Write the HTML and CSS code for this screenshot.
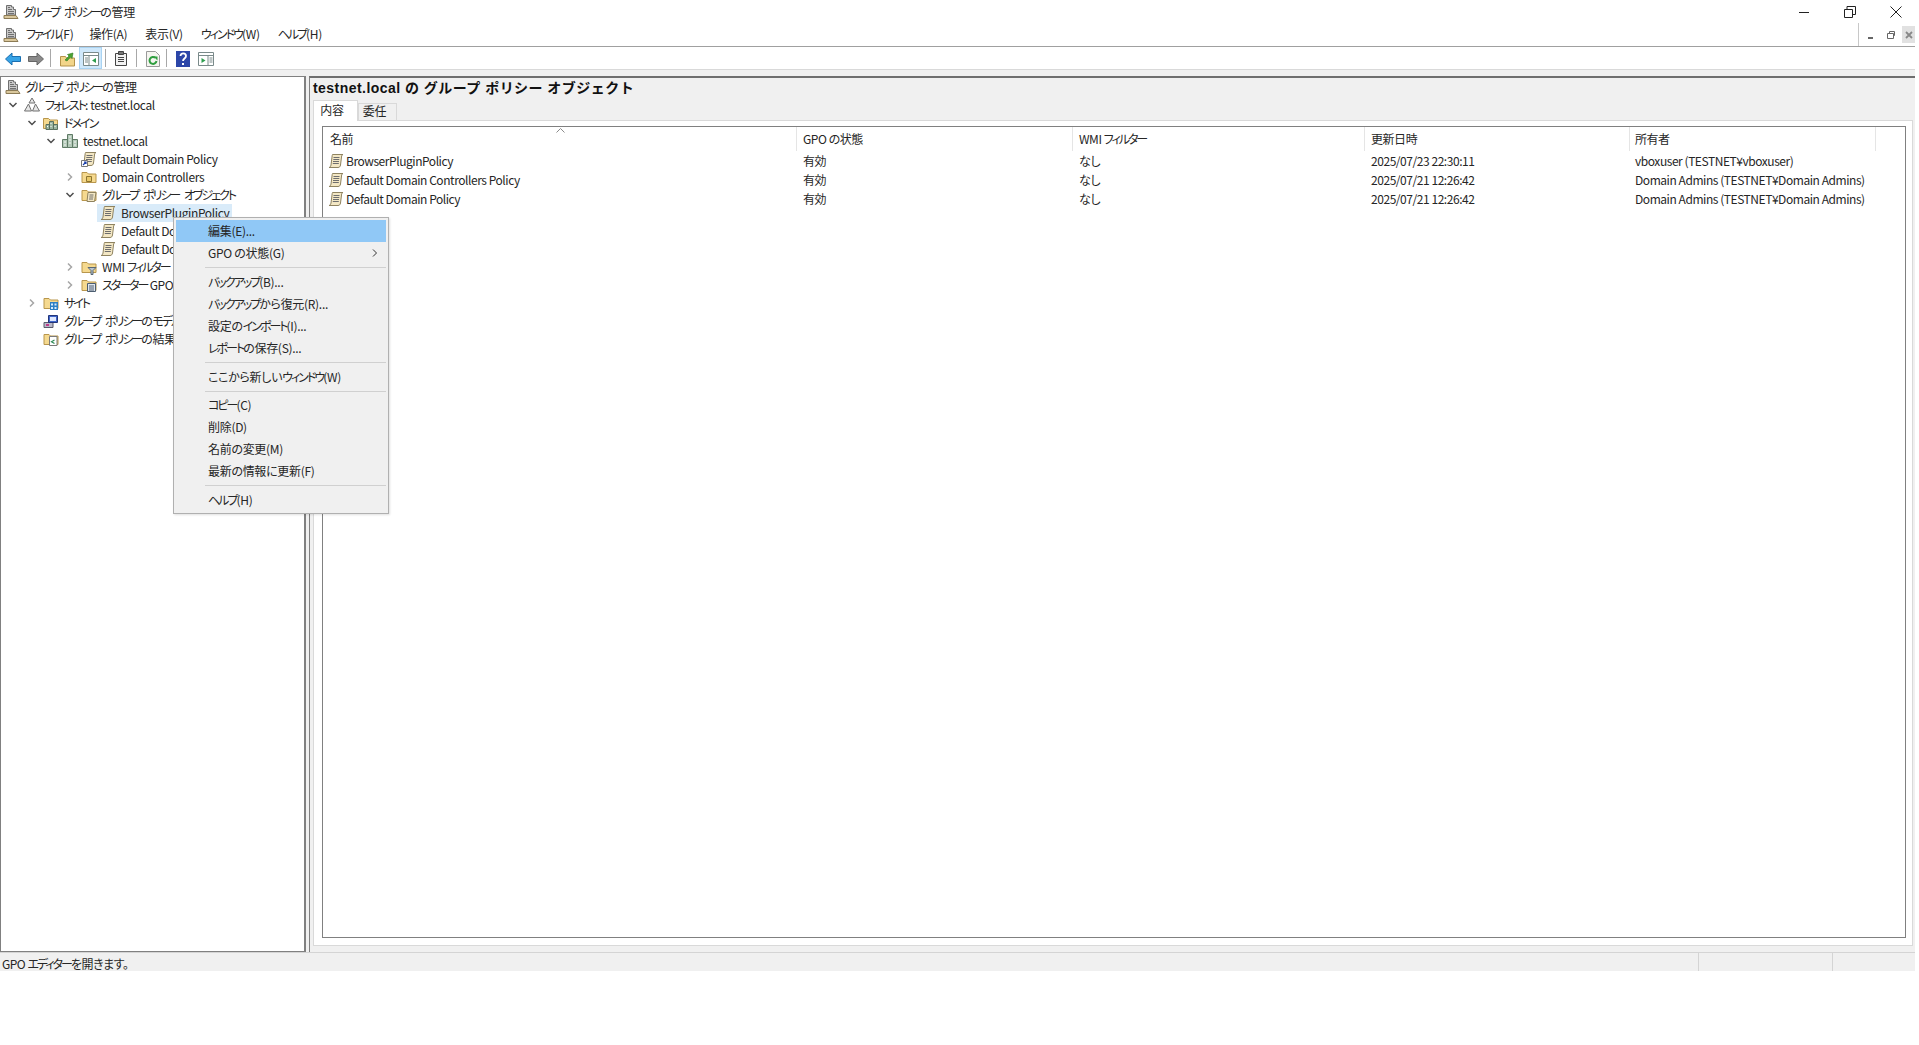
FILE: index.html
```html
<!DOCTYPE html>
<html lang="ja">
<head>
<meta charset="utf-8">
<title>グループ ポリシーの管理</title>
<link rel="stylesheet" href="styles.css">
</head>
<body>
<svg class="defs" width="0" height="0" aria-hidden="true">
  <symbol id="i-console" viewBox="0 0 16 16">
    <path d="M3.500 1.500h5v1.500h2v2.500h2v5.500h-9z" fill="#c9c9c9" stroke="#6f6f6f"/>
    <path d="M5 3.500h2M5 5.500h4M5 7.500h6M5 9.500h6" stroke="#6f6f6f"/>
    <path d="M1 11.500h12l2 3H1z" fill="#d9c79c" stroke="#8c7b55"/>
  </symbol>
  <symbol id="i-forest" viewBox="0 0 16 16">
    <path d="M8 1l3 5H5zM4.500 7l3 7h-7zM11.500 7l4 7h-7z" fill="#e6e6e6" stroke="#707070"/>
  </symbol>
  <symbol id="i-folder" viewBox="0 0 16 16">
    <path d="M1 13.500V3.500h5l1.500 1.500h7.500v8.500z" fill="#f5d98f" stroke="#b8964c"/>
  </symbol>
  <symbol id="i-domains" viewBox="0 0 16 16">
    <path d="M.5 13.500V3.500h5l1.500 1.500h7.500v8.500z" fill="#f5d98f" stroke="#b8964c"/>
    <path d="M6.500 6.500h4v8h-4zM10.500 9.500h4v5h-4zM3 9.500h3.500v5H3z" fill="#9ab5a0" stroke="#59705f"/>
    <path d="M8 8v1M8 11v1M12 11v1M4.500 11v1" stroke="#fff"/>
  </symbol>
  <symbol id="i-domain" viewBox="0 0 16 16">
    <path d="M5.500 1.500h5v13h-5zM.5 6.500h5v8h-5zM10.500 6.500h5v8h-5z" fill="#b3c9b8" stroke="#5f7a66"/>
    <path d="M7 4h2M7 7h2M7 10h2M2 9h2M2 12h2M12 9h2M12 12h2" stroke="#f5f5f5"/>
  </symbol>
  <symbol id="i-scroll" viewBox="0 0 16 16">
    <path d="M4.500 1.500h10.500c-1 .5-1.500 1-1.500 2.500l-1 8c-.2 1.500-1 2.500-2.500 2.500H1c1.200-.4 1.700-1 2-2.500l1-8c.1-1 .2-2 .5-2.500z" fill="#f3e7c4" stroke="#8f8360"/>
    <path d="M5.500 4.500h6M5.300 6.500h6M5 8.500h6M4.800 10.500h6" stroke="#6e6e6e"/>
  </symbol>
  <symbol id="i-link" viewBox="0 0 16 16">
    <use href="#i-scroll"/>
    <path d="M.5 9.500h6v6h-6z" fill="#fff" stroke="#777"/>
    <path d="M2 14l3-3M3 11h2v2" fill="none" stroke="#1b3fa8" stroke-width="1.200"/>
  </symbol>
  <symbol id="i-ou" viewBox="0 0 16 16">
    <use href="#i-folder"/>
    <path d="M5.500 7.500h5v5h-5z" fill="#e8c868" stroke="#8c7430"/>
  </symbol>
  <symbol id="i-gpofolder" viewBox="0 0 16 16">
    <use href="#i-folder"/>
    <path d="M7 5.500h8l-1.500 9H6z" fill="#f3e7c4" stroke="#8f8360"/>
    <path d="M8.500 8h4M8.300 10h4M8 12h4" stroke="#6e6e6e"/>
  </symbol>
  <symbol id="i-wmi" viewBox="0 0 16 16">
    <use href="#i-folder"/>
    <path d="M7 8.500h8l-3 3v4h-2v-4z" fill="#b9c4cf" stroke="#5a6874"/>
  </symbol>
  <symbol id="i-starter" viewBox="0 0 16 16">
    <use href="#i-folder"/>
    <path d="M6.500 6.500h8v8h-8z" fill="#dfe6ee" stroke="#4c5d70"/>
    <path d="M8 9h5M8 11h5M8 13h5" stroke="#4c5d70"/>
  </symbol>
  <symbol id="i-sites" viewBox="0 0 16 16">
    <use href="#i-folder"/>
    <path d="M7 7h8v8H7z" fill="#2c7fc4"/>
    <path d="M8 8.500h2v2H8zM11.500 8.500h2v2h-2zM8 12h2v2H8zM11.500 12h2v2h-2z" fill="#d7ecfb"/>
  </symbol>
  <symbol id="i-model" viewBox="0 0 16 16">
    <path d="M1 9.500h9v5H1z" fill="#b9b9c9" stroke="#59596b"/>
    <path d="M5.500 2.500h9v7h-9z" fill="#3f66c9" stroke="#22347a"/>
    <path d="M7 4h6v4H7z" fill="#dfe8ff"/>
    <path d="M3 11h3v2H3z" fill="#c03a8a"/>
  </symbol>
  <symbol id="i-result" viewBox="0 0 16 16">
    <use href="#i-folder"/>
    <path d="M6.500 5.500h7.500v9H6.500z" fill="#fff" stroke="#7a7a7a"/>
    <path d="M11.500 9l-3 1.800 3 1.800" fill="none" stroke="#2e8b57" stroke-width="1.200"/>
  </symbol>
  <symbol id="i-open" viewBox="0 0 10 10">
    <path d="M1.500 3l3.500 3.500L8.500 3" fill="none" stroke="#4d4d4d" stroke-width="1.500"/>
  </symbol>
  <symbol id="i-closed" viewBox="0 0 10 10">
    <path d="M3 1.500L6.500 5 3 8.500" fill="none" stroke="#a6a6a6" stroke-width="1.500"/>
  </symbol>
</svg>

<header class="titlebar">
  <svg class="ico"><use href="#i-console"/></svg>
  <span class="title-text"><span class="kana">グループ ポリシー</span>の管理</span>
  <div class="winctl">
    <span class="winbtn"><svg width="12" height="12" viewBox="0 0 12 12"><path d="M1 6.500h10" stroke="#222"/></svg></span>
    <span class="winbtn"><svg width="12" height="12" viewBox="0 0 12 12"><path d="M.5 3.500h8v8h-8zM3 3.500V.5h8.500v8H8.500" fill="none" stroke="#222"/></svg></span>
    <span class="winbtn"><svg width="12" height="12" viewBox="0 0 12 12"><path d="M.5.500l11 11M11.500.500l-11 11" stroke="#222"/></svg></span>
  </div>
</header>

<div class="app">
  <nav class="menubar">
    <svg class="ico"><use href="#i-console"/></svg>
    <span class="menu m1"><span class="kana">ファイル</span>(F)</span>
    <span class="menu m2">操作(A)</span>
    <span class="menu">表示(V)</span>
    <span class="menu"><span class="kana">ウィンドウ</span>(W)</span>
    <span class="menu"><span class="kana">ヘルプ</span>(H)</span>
    <div class="mdi">
      <span class="mdibtn"><svg width="10" height="10" viewBox="0 0 10 10"><path d="M2 8h5" stroke="#666" stroke-width="2"/></svg></span>
      <span class="mdibtn"><svg width="10" height="10" viewBox="0 0 10 10"><path d="M1.500 3.500h6v5h-6zM3.500 3.500v-2h5v4h-1" fill="none" stroke="#666"/></svg></span>
      <span class="mdibtn mdiclose"><svg width="10" height="10" viewBox="0 0 10 10"><path d="M2 2l6 6M8 2l-6 6" stroke="#888" stroke-width="1.800"/></svg></span>
    </div>
  </nav>

  <div class="toolbar">
    <span class="tool t-back"><svg width="16" height="14" viewBox="0 0 16 14"><path d="M.5 7L7 1v3.500h8.500v5H7V13z" fill="#37a3e6" stroke="#1b6fb0"/></svg></span>
    <span class="tool t-fwd"><svg width="16" height="14" viewBox="0 0 16 14"><path d="M15.500 7L9 1v3.500H.5v5H9V13z" fill="#8a8a8a" stroke="#666"/></svg></span>
    <span class="tsep"></span>
    <span class="tool t-up"><svg width="15" height="16" viewBox="0 0 15 16"><path d="M.5 15V5.500h5l1 1.500h8v8z" fill="#f2d58a" stroke="#b5934a"/><path d="M5 9l4-4-1.500-1.500L13 2l-1 5.500L10.500 6 7 10z" fill="#4aa232" stroke="#2f7a1e" stroke-width=".6"/></svg></span>
    <span class="tool tool-on"><svg width="16" height="14" viewBox="0 0 16 14"><path d="M.5.500h15v13H.5z" fill="#fff" stroke="#7a8a8a"/><path d="M.5 3.500h15M6 3.500v10" stroke="#7a8a8a"/><path d="M2 6h3M2 8h3M2 10h3" stroke="#7a8a8a"/><path d="M13 6v5L9 8.500z" fill="#2e9e4f"/></svg></span>
    <span class="tsep"></span>
    <span class="tool t-clip"><svg width="12" height="15" viewBox="0 0 12 15"><path d="M.5 2.500h11v12H.5z" fill="#f2f2f2" stroke="#444"/><path d="M3.500.5h5v3h-5z" fill="#777" stroke="#444"/><path d="M3 6.500h6M3 8.500h6M3 10.500h6" stroke="#444"/></svg></span>
    <span class="tsep"></span>
    <span class="tool t-ref"><svg width="14" height="16" viewBox="0 0 14 16"><path d="M.5.500h9l4 4v11H.5z" fill="#f5f5f0" stroke="#9a9a9a"/><path d="M10.500 10a3.500 3.500 0 1 1-1.200-3.300" fill="none" stroke="#2f9e3f" stroke-width="2"/><path d="M7.500 5.500h4v4z" fill="#2f9e3f"/></svg></span>
    <span class="tsep"></span>
    <span class="tool t-help"><svg width="14" height="16" viewBox="0 0 14 16"><path d="M0 0h14v16H0z" fill="#2c46a8"/><path d="M4.500 5c0-3.500 5.500-3.500 5.500 0 0 2.500-3 2.500-3 5" fill="none" stroke="#fff" stroke-width="1.800"/><path d="M6 12h2v2H6z" fill="#fff"/></svg></span>
    <span class="tool t-panel"><svg width="16" height="14" viewBox="0 0 16 14"><path d="M.5.500h15v13H.5z" fill="#fff" stroke="#7a8a8a"/><path d="M.5 3.500h15M10 3.500v10" stroke="#7a8a8a"/><path d="M11.500 6h3M11.500 8h3M11.500 10h3" stroke="#7a8a8a"/><path d="M3.500 6v5l4-2.500z" fill="#2e9e4f"/></svg></span>
  </div>

  <main class="workspace">
    <section class="treepane">
      <div class="trow root"><svg class="ico"><use href="#i-console"/></svg><span><span class="kana">グループ ポリシー</span>の管理</span></div>
      <div class="trow l0"><svg class="chev"><use href="#i-open"/></svg><svg class="ico"><use href="#i-forest"/></svg><span><span class="kana">フォレスト</span>: testnet.local</span></div>
      <div class="trow l1"><svg class="chev"><use href="#i-open"/></svg><svg class="ico"><use href="#i-domains"/></svg><span class="kana">ドメイン</span></div>
      <div class="trow l2"><svg class="chev"><use href="#i-open"/></svg><svg class="ico"><use href="#i-domain"/></svg><span>testnet.local</span></div>
      <div class="trow l3"><span class="chev"></span><svg class="ico"><use href="#i-link"/></svg><span>Default Domain Policy</span></div>
      <div class="trow l3"><svg class="chev"><use href="#i-closed"/></svg><svg class="ico"><use href="#i-ou"/></svg><span>Domain Controllers</span></div>
      <div class="trow l3"><svg class="chev"><use href="#i-open"/></svg><svg class="ico"><use href="#i-gpofolder"/></svg><span class="kana">グループ ポリシー オブジェクト</span></div>
      <div class="trow l4"><span class="chev chev-sel"></span><div class="selected"><svg class="ico"><use href="#i-scroll"/></svg><span>BrowserPluginPolicy</span></div></div>
      <div class="trow l4"><span class="chev"></span><svg class="ico"><use href="#i-scroll"/></svg><span>Default Domain Controllers Policy</span></div>
      <div class="trow l4"><span class="chev"></span><svg class="ico"><use href="#i-scroll"/></svg><span>Default Domain Policy</span></div>
      <div class="trow l3"><svg class="chev"><use href="#i-closed"/></svg><svg class="ico"><use href="#i-wmi"/></svg><span>WMI <span class="kana">フィルター</span></span></div>
      <div class="trow l3"><svg class="chev"><use href="#i-closed"/></svg><svg class="ico"><use href="#i-starter"/></svg><span><span class="kana">スターター</span> GPO</span></div>
      <div class="trow l1"><svg class="chev"><use href="#i-closed"/></svg><svg class="ico"><use href="#i-sites"/></svg><span class="kana">サイト</span></div>
      <div class="trow l1"><span class="chev"></span><svg class="ico"><use href="#i-model"/></svg><span><span class="kana">グループ ポリシー</span>の<span class="kana">モデル</span>作成</span></div>
      <div class="trow l1"><span class="chev"></span><svg class="ico"><use href="#i-result"/></svg><span><span class="kana">グループ ポリシー</span>の結果</span></div>
    </section>

    <section class="detail">
      <h1 class="heading">testnet.local の グループ ポリシー オブジェクト</h1>
      <div class="tabs">
        <span class="tab tab-on">内容</span>
        <span class="tab">委任</span>
      </div>
      <div class="panel">
        <div class="list">
          <div class="lrow lhead">
            <span class="cell namehead">名前<svg class="sort" width="9" height="5" viewBox="0 0 9 5"><path d="M.5 4.500l4-4 4 4" fill="none" stroke="#8a8a8a"/></svg></span>
            <span class="cell">GPO の状態</span>
            <span class="cell">WMI <span class="kana">フィルター</span></span>
            <span class="cell">更新日時</span>
            <span class="cell">所有者</span>
            <span class="cell"></span>
          </div>
          <div class="lrow">
            <span class="cell namecell"><svg class="ico"><use href="#i-scroll"/></svg>BrowserPluginPolicy</span>
            <span class="cell">有効</span><span class="cell">なし</span>
            <span class="cell">2025/07/23 22:30:11</span>
            <span class="cell">vboxuser (TESTNET¥vboxuser)</span>
          </div>
          <div class="lrow">
            <span class="cell namecell"><svg class="ico"><use href="#i-scroll"/></svg>Default Domain Controllers Policy</span>
            <span class="cell">有効</span><span class="cell">なし</span>
            <span class="cell">2025/07/21 12:26:42</span>
            <span class="cell">Domain Admins (TESTNET¥Domain Admins)</span>
          </div>
          <div class="lrow">
            <span class="cell namecell"><svg class="ico"><use href="#i-scroll"/></svg>Default Domain Policy</span>
            <span class="cell">有効</span><span class="cell">なし</span>
            <span class="cell">2025/07/21 12:26:42</span>
            <span class="cell">Domain Admins (TESTNET¥Domain Admins)</span>
          </div>
        </div>
      </div>
    </section>
  </main>

  <footer class="statusbar">
    <span class="st-main">GPO <span class="kana">エディター</span>を開きます。</span>
    <span class="st-a"></span>
    <span class="st-b"></span>
  </footer>
</div>

<div class="ctx">
  <div class="ci ci-on">編集(E)...</div>
  <div class="ci">GPO の状態(G)<svg class="ci-arrow" width="6" height="8" viewBox="0 0 6 8"><path d="M1 .5L4.500 4 1 7.500" fill="none" stroke="#333"/></svg></div>
  <div class="cs"></div>
  <div class="ci"><span class="kana">バックアップ</span>(B)...</div>
  <div class="ci"><span class="kana">バックアップ</span>から復元(R)...</div>
  <div class="ci">設定の<span class="kana">インポート</span>(I)...</div>
  <div class="ci"><span class="kana">レポート</span>の保存(S)...</div>
  <div class="cs"></div>
  <div class="ci">ここから新しい<span class="kana">ウィンドウ</span>(W)</div>
  <div class="cs cs-short"></div>
  <div class="ci"><span class="kana">コピー</span>(C)</div>
  <div class="ci">削除(D)</div>
  <div class="ci">名前の変更(M)</div>
  <div class="ci">最新の情報に更新(F)</div>
  <div class="cs"></div>
  <div class="ci"><span class="kana">ヘルプ</span>(H)</div>
</div>
</body>
</html>
```

FILE: styles.css
```css
* { box-sizing: border-box; }
html, body { margin: 0; padding: 0; background: #fff; }
body {
  width: 1919px;
  height: 1045px;
  overflow: hidden;
  position: relative;
  font-family: "Noto Sans CJK JP", "Noto Sans", sans-serif;
  font-size: 12px;
  font-feature-settings: "palt";
  letter-spacing: -.3px;
  color: #262626;
  line-height: 18px;
}
.kana { letter-spacing: -2px; word-spacing: 4px; }
.defs { position: absolute; }
.ico { width: 16px; height: 16px; flex: none; display: block; }

.titlebar { display: flex; align-items: center; height: 23px; padding-left: 3px; }
.title-text { margin-left: 4px; }
.winctl { display: flex; margin-left: auto; }
.winbtn { width: 46px; height: 23px; display: flex; align-items: center; justify-content: center; }

.app { width: 1915px; }

.menubar {
  display: flex; align-items: center; height: 24px; padding: 0 0 0 3px;
  border-bottom: 1px solid #a0a0a0;
}
.menu { margin-left: 18px; padding-bottom: 2px; }
.m1 { margin-left: 7px; }
.m2 { margin-left: 16px; }
.mdi {
  display: flex; margin-left: auto; height: 23px;
  border-left: 1px solid #c8c8c8; align-items: center;
}
.mdibtn { width: 17px; height: 17px; margin-left: 3px; display: flex; align-items: center; justify-content: center; }
.mdiclose { background: #e1e1e1; width: 13px; }

.toolbar {
  display: flex; align-items: center; height: 23px; padding-left: 5px;
  border-bottom: 1px solid #d9d9d9;
}
.tool { display: flex; align-items: center; justify-content: center; height: 22px; padding-top: 1px; }
.t-fwd { margin-left: 7px; }
.tsep { width: 1px; height: 18px; background: #a8a8a8; }
.t-fwd + .tsep { margin-left: 6px; }
.t-up { margin-left: 9px; }
.tool-on {
  width: 23px; margin-left: 4px; background: #cfe8fb; border: 1px solid #a9d3f2;
}
.tool-on + .tsep { margin-left: 3px; }
.t-clip { margin-left: 9px; }
.t-clip + .tsep { margin-left: 9px; }
.t-ref { margin-left: 9px; }
.t-ref + .tsep { margin-left: 6px; }
.t-help { margin-left: 9px; }
.t-panel { margin-left: 8px; }

.workspace {
  display: flex; height: 882px; padding-top: 6px; background: #f0f0f0;
}
.treepane {
  width: 306px; height: 876px; background: #fff;
  border: 1px solid #808080; border-right-width: 2px;
  letter-spacing: -.38px;
}
.treepane .kana { letter-spacing: -2px; }
.trow { display: flex; align-items: center; height: 18px; white-space: nowrap; }
.trow > span:last-child, .selected > span { margin-left: 3px; padding: 0 2px; }
.root { padding-left: 4px; margin-top: 1px; }
.root > span:last-child { margin-left: 2px; }
.l0 { padding-left: 7px; }
.l1 { padding-left: 26px; }
.l2 { padding-left: 45px; }
.l3 { padding-left: 64px; }
.l4 { padding-left: 83px; }
.chev { width: 10px; height: 10px; flex: none; margin-right: 6px; display: block; }
.chev-sel { margin-right: 3px; }
.selected { display: flex; align-items: center; height: 18px; padding: 0 1px 0 3px; background: #d9ebf9; }

.detail {
  margin-left: 3px; width: 1606px; height: 876px;
  border-top: 2px solid #6e6e6e; border-left: 1px solid #808080;
  padding-left: 3px; display: flex; flex-direction: column;
}
.heading {
  margin: 0; height: 21px; font-size: 14px; font-weight: 700; line-height: 21px;
  color: #111; letter-spacing: .46px; white-space: nowrap; font-feature-settings: normal;
  font-family: "Liberation Sans", "Noto Sans CJK JP", sans-serif;
}
.tabs { display: flex; height: 21px; align-items: flex-end; }
.tab {
  width: 39px; height: 17px; text-align: center; line-height: 14px; padding-right: 6px;
  background: #f0f0f0; border: 1px solid #d9d9d9; border-bottom: 0;
}
.tab-on {
  width: 45px; height: 21px; line-height: 17px; background: #fff;
  position: relative; z-index: 1; margin-bottom: -1px; padding-right: 7px;
}
.panel {
  height: 826px; width: 1600px; background: #fff;
  border: 1px solid #d9d9d9; padding: 5px 6px 7px 8px;
}
.list { height: 812px; border: 1px solid #808080; background: #fff; letter-spacing: -.45px; }
.list .kana { letter-spacing: -2px; }
.lrow {
  display: grid; grid-template-columns: 474px 276px 292px 265px 246px 31px;
  height: 19px; align-items: center; white-space: nowrap;
}
.lhead { height: 24px; }
.lhead .cell { height: 24px; line-height: 24px; border-right: 1px solid #e5e5e5; position: relative; }
.lhead .cell:last-child { border-right: 0; }
.cell { padding-left: 6px; overflow: hidden; }
.cell:nth-child(5) { padding-left: 5px; }
.namehead { padding-left: 7px; }
.namecell { display: flex; align-items: center; padding-left: 5px; }
.namecell .ico { margin-right: 2px; }
.sort { position: absolute; left: 233px; top: 1px; }

.statusbar {
  display: flex; height: 19px; background: #f0f0f0;
  border-top: 1px solid #d4d4d4; line-height: 22px; letter-spacing: -.5px;
}
.st-main { width: 1699px; padding-left: 2px; border-right: 1px solid #d4d4d4; overflow: hidden; }
.st-a { width: 134px; border-right: 1px solid #d4d4d4; }
.st-b { flex: 1; }

.ctx {
  position: absolute; left: 173px; top: 217px; width: 216px; height: 297px;
  background: #f0f0f0; border: 1px solid #b0b0b0; padding: 2px;
  box-shadow: 1px 1px 2px rgba(0,0,0,.12);
}
.ci { height: 22px; line-height: 21px; padding-left: 32px; position: relative; white-space: nowrap; }
.ci-on { background: #90c8f6; }
.ci-arrow { position: absolute; right: 8px; top: 7px; }
.cs { height: 7px; margin-left: 29px; position: relative; }
.cs::after { content: ""; position: absolute; left: 0; right: 0; top: 3px; height: 1px; background: #d0d0d0; }
.cs-short { height: 6px; }
```
